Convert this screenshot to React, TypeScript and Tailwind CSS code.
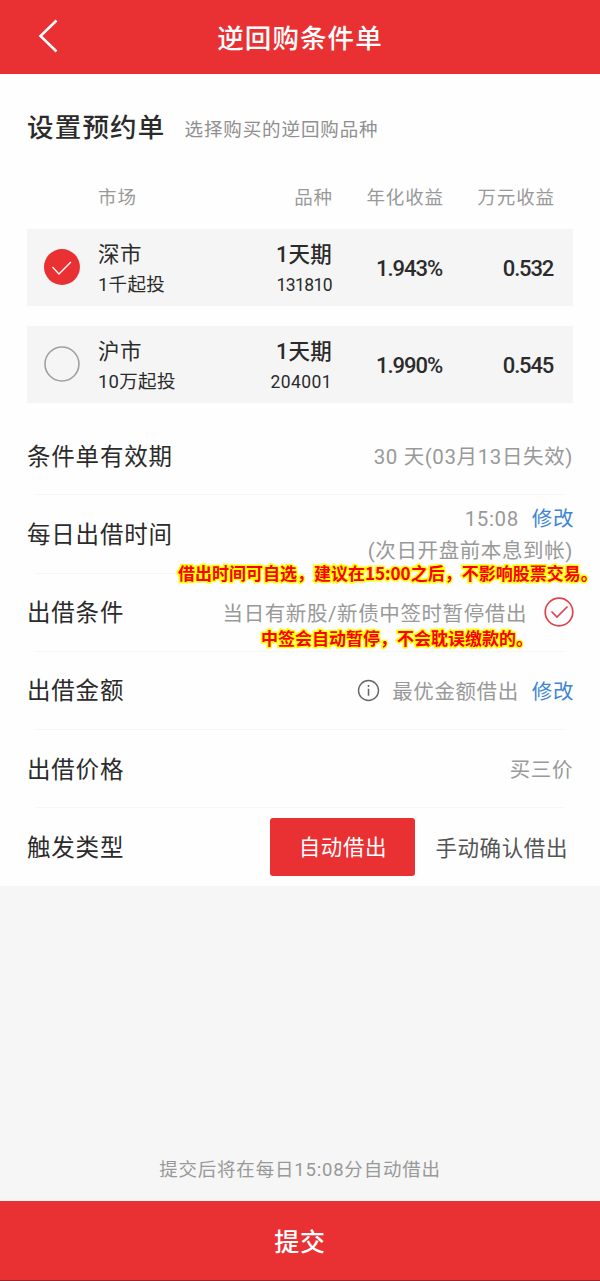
import type { ReactNode } from "react";

const markets = [
  {
    id: "sz",
    name: "深市",
    minimum: "1千起投",
    term: "1天期",
    code: "131810",
    codeSpacing: "tracking-[-0.6px]",
    annual: "1.943%",
    perTenThousand: "0.532",
    selected: true,
  },
  {
    id: "sh",
    name: "沪市",
    minimum: "10万起投",
    term: "1天期",
    code: "204001",
    codeSpacing: "tracking-[0.4px]",
    annual: "1.990%",
    perTenThousand: "0.545",
    selected: false,
  },
];

type Market = (typeof markets)[number];

const SelectMark = ({ selected }: { selected: boolean }) => (
  <svg className="-mt-px" width="36" height="36" viewBox="0 0 36 36" fill="none">
    {selected ? (
      <>
        <circle cx="18" cy="18" r="18" fill="#e93033" />
        <path d="M8.5 18l6.5 7L27 13" stroke="#fff" strokeWidth="1.3" />
      </>
    ) : (
      <circle cx="18" cy="18" r="17" stroke="#a0a0a0" strokeWidth="1.6" />
    )}
  </svg>
);

const MarketCard = ({ market }: { market: Market }) => (
  <div className="flex h-[77px] items-center bg-[#f5f5f5] pl-[17px] pr-[20px]">
    <SelectMark selected={market.selected} />
    <div className="ml-[18px] flex w-[120px] flex-col whitespace-nowrap pt-[5px]">
      <span className="text-[21.5px] leading-[31px] tracking-[0.5px]">{market.name}</span>
      <span className="text-[18.5px] leading-[31px] tracking-[0.3px]">{market.minimum}</span>
    </div>
    <div className="flex w-[114.5px] flex-col items-end whitespace-nowrap pt-[3px]">
      <span className="text-[21.5px] leading-[31px] tracking-[0.2px] font-medium">{market.term}</span>
      <span className={`text-[17.5px] leading-[30px] ${market.codeSpacing}`}>{market.code}</span>
    </div>
    <span className="w-[110.5px] pt-[2px] text-right text-[22px] font-medium tracking-[-1px]">{market.annual}</span>
    <span className="w-[111px] pt-[2px] text-right text-[22px] font-medium tracking-[-1.2px]">
      {market.perTenThousand}
    </span>
  </div>
);

const Row = ({ label, last, children }: { label: string; last?: boolean; children: ReactNode }) => (
  <div className="relative h-[78.3px] px-[27px]">
    <div className="flex h-full items-center justify-between">
      <span className="pt-[4px] text-[23.5px] tracking-[0.8px]">{label}</span>
      {children}
    </div>
    {!last && <div className="mx-[8px] h-px bg-[#f6f6f6]" />}
  </div>
);

const Value = ({ children }: { children: ReactNode }) => (
  <span className="-mb-[2px] whitespace-nowrap pt-[2px] text-[20.5px] leading-[32px] tracking-[0.6px] text-[#999]">
    {children}
  </span>
);

const Edit = () => (
  <span className="-mr-px -mb-[2px] ml-[13px] pt-[2px] text-[20.5px] leading-[32px] tracking-[0.6px] text-[#3d85d4]">
    修改
  </span>
);

const Note = ({ className, children }: { className: string; children: ReactNode }) => (
  <p
    className={`absolute z-10 whitespace-nowrap font-['Noto_Sans_CJK_SC',sans-serif] text-[17px] leading-[24px] font-bold text-[#fb0007] [paint-order:stroke_fill] [-webkit-text-stroke:3px_#ffff00] ${className}`}
  >
    {children}
  </p>
);

const App = () => {
  return (
    <div className="flex h-[1281px] w-[600px] flex-col overflow-hidden bg-[#f5f6f5] font-['Roboto','Noto_Sans_CJK_SC',sans-serif] text-[#2b2b2b]">
      <header className="grid h-[74px] grid-cols-[80px_1fr_80px] items-center bg-[#e93033] text-white">
        <svg className="mt-[-2px] ml-[36px]" width="24" height="36" viewBox="0 0 24 36" fill="none">
          <path d="M20.5 2.5L4.5 18l16 15.5" stroke="currentColor" strokeWidth="2.5" />
        </svg>
        <h1 className="pt-[4px] text-center text-[26.5px] font-medium tracking-[1.1px]">逆回购条件单</h1>
      </header>

      <main className="h-[812px] bg-[#fefefe]">
        <div className="flex h-[106px] items-center pl-[27px]">
          <h2 className="pt-[2px] text-[26.5px] font-medium tracking-[1.2px]">设置预约单</h2>
          <p className="ml-[19px] pt-[7px] text-[18.5px] tracking-[0.9px] text-[#8f8f8f]">选择购买的逆回购品种</p>
        </div>

        {/* Column titles */}
        <div className="flex h-[36px] items-center px-[27px] pt-[2px] text-[18.5px] tracking-[0.9px] text-[#999]">
          <span className="ml-[71px] w-[120px]">市场</span>
          <span className="w-[115px] text-right">品种</span>
          <span className="w-[111px] text-right">年化收益</span>
          <span className="w-[111px] text-right">万元收益</span>
        </div>

        <div className="mt-[13px] flex flex-col gap-[20px] px-[27px]">
          {markets.map((market) => (
            <MarketCard key={market.id} market={market} />
          ))}
        </div>

        <div className="mt-[13px]">
          <Row label="条件单有效期">
            <Value>30 天(03月13日失效)</Value>
          </Row>

          <Row label="每日出借时间">
            <div className="flex flex-col items-end">
              <div className="flex">
                <Value>15:08</Value>
                <Edit />
              </div>
              <Value>(次日开盘前本息到帐)</Value>
            </div>
            <Note className="left-[178px] top-[67px]">借出时间可自选，建议在15:00之后，不影响股票交易。</Note>
          </Row>

          <Row label="出借条件">
            <div className="-mr-px flex items-center">
              <Value>当日有新股/新债中签时暂停借出</Value>
              <svg className="ml-[17px]" width="30" height="30" viewBox="0 0 30 30" fill="none" stroke="#df4349">
                <circle cx="15" cy="15" r="13.8" strokeWidth="1.7" />
                <path d="M7.5 14.5l5.5 5.5 10.5-10.5" strokeWidth="1.7" />
              </svg>
            </div>
            <Note className="left-[261px] top-[53px]">中签会自动暂停，不会耽误缴款的。</Note>
          </Row>

          <Row label="出借金额">
            <div className="flex items-center">
              <svg className="mr-[12px]" width="23" height="23" viewBox="0 0 23 23" fill="none" stroke="#666">
                <circle cx="11.5" cy="11.5" r="10" strokeWidth="1.4" />
                <path d="M11.5 9.8v7M11.5 6v2" strokeWidth="1.5" />
              </svg>
              <Value>最优金额借出</Value>
              <Edit />
            </div>
          </Row>

          <Row label="出借价格">
            <Value>买三价</Value>
          </Row>

          <Row label="触发类型" last>
            <div className="flex items-center text-[21.5px] tracking-[0.6px]">
              <button className="h-[58px] w-[145px] rounded-[3px] bg-[#e93033] pt-[3px] tracking-[0.6px] text-white">
                自动借出
              </button>
              <span className="ml-[20px] mr-[5px] pt-[4px] text-[#555]">手动确认借出</span>
            </div>
          </Row>
        </div>
      </main>

      <p className="mt-auto mb-[16px] text-center text-[18.5px] leading-[30px] tracking-[0.8px] text-[#999]">
        提交后将在每日15:08分自动借出
      </p>
      <button className="h-[80px] shrink-0 border-b border-[#96262a] bg-[#e93033] pt-[4px] text-[25px] font-medium tracking-[0.8px] text-white">
        提交
      </button>
    </div>
  );
};

export default App;
